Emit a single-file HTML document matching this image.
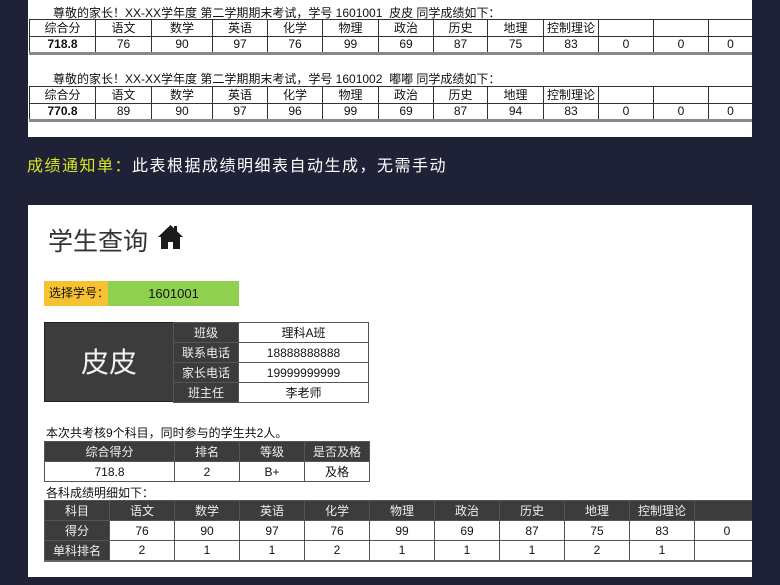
<!DOCTYPE html>
<html><head><meta charset="utf-8"><style>
*{margin:0;padding:0;box-sizing:border-box}
body{width:780px;height:585px;background:#1f2236;position:relative;overflow:hidden;font-family:"Liberation Sans","Noto Sans CJK SC",sans-serif;color:#111}
.p{position:absolute;background:#fff}
.a{position:absolute;white-space:nowrap}
table{position:absolute;border-collapse:collapse;table-layout:fixed}
td{text-align:center;font-size:12px;padding:0;overflow:hidden;white-space:nowrap}
.t1 td{border:1px solid #333;height:17px;line-height:15px}
.t1{border-bottom:3px solid #888}
.d{background:#3c3c3c;color:#eee}
.t2 td{border:1px solid #555;height:20px}
</style></head><body>
<div class="p" style="left:28px;top:0;width:724px;height:137px"></div>
<div class="a" style="left:53px;top:4px;font-size:12px">尊敬的家长！XX-XX学年度 第二学期期末考试，学号 1601001&nbsp; 皮皮 同学成绩如下：</div>
<table class="t1" style="left:29px;top:19px;width:723px">
<colgroup><col style="width:66px"><col style="width:56px"><col style="width:61px"><col style="width:55px"><col style="width:55px"><col style="width:56px"><col style="width:55px"><col style="width:54px"><col style="width:56px"><col style="width:55px"><col style="width:55px"><col style="width:55px"><col style="width:44px"></colgroup>
<tr><td>综合分</td><td>语文</td><td>数学</td><td>英语</td><td>化学</td><td>物理</td><td>政治</td><td>历史</td><td>地理</td><td>控制理论</td><td></td><td></td><td></td></tr>
<tr><td><b>718.8</b></td><td>76</td><td>90</td><td>97</td><td>76</td><td>99</td><td>69</td><td>87</td><td>75</td><td>83</td><td>0</td><td>0</td><td>0</td></tr></table>
<div class="a" style="left:53px;top:70px;font-size:12px">尊敬的家长！XX-XX学年度 第二学期期末考试，学号 1601002&nbsp; 嘟嘟 同学成绩如下：</div>
<table class="t1" style="left:29px;top:86px;width:723px">
<colgroup><col style="width:66px"><col style="width:56px"><col style="width:61px"><col style="width:55px"><col style="width:55px"><col style="width:56px"><col style="width:55px"><col style="width:54px"><col style="width:56px"><col style="width:55px"><col style="width:55px"><col style="width:55px"><col style="width:44px"></colgroup>
<tr><td>综合分</td><td>语文</td><td>数学</td><td>英语</td><td>化学</td><td>物理</td><td>政治</td><td>历史</td><td>地理</td><td>控制理论</td><td></td><td></td><td></td></tr>
<tr><td><b>770.8</b></td><td>89</td><td>90</td><td>97</td><td>96</td><td>99</td><td>69</td><td>87</td><td>94</td><td>83</td><td>0</td><td>0</td><td>0</td></tr></table>
<div class="a" style="left:27px;top:152px;font-size:16px;letter-spacing:1.5px;color:#fff"><span style="color:#d6e622">成绩通知单：</span>此表根据成绩明细表自动生成，无需手动</div>

<div class="p" style="left:28px;top:205px;width:724px;height:372px"></div>
<div class="a" style="left:48px;top:222px;font-size:25px;color:#333">学生查询</div>
<svg class="a" style="left:157px;top:224px" width="27" height="26" viewBox="0 0 27 26"><path d="M13.5 1 L1 13 L4 13 L4 25 L11 25 L11 18 L16 18 L16 25 L23 25 L23 13 L26 13 L20 7.2 L20 2 L17 2 L17 4.4 Z" fill="#1a1a1a"/></svg>
<div class="a" style="left:44px;top:281px;width:64px;height:25px;background:#f6c231;font-size:12px;line-height:25px;padding-left:5px">选择学号：</div>
<div class="a" style="left:108px;top:281px;width:131px;height:25px;background:#8fd14f;font-size:13px;line-height:25px;text-align:center">1601001</div>
<div class="a" style="left:44px;top:322px;width:130px;height:80px;background:#3c3c3c;color:#f2f2f2;font-size:28px;line-height:80px;text-align:center;border:1px solid #222">皮皮</div>
<table class="t2" style="left:173px;top:322px;width:195px">
<colgroup><col style="width:65px"><col style="width:130px"></colgroup>
<tr><td class="d">班级</td><td>理科A班</td></tr>
<tr><td class="d">联系电话</td><td>18888888888</td></tr>
<tr><td class="d">家长电话</td><td>19999999999</td></tr>
<tr><td class="d">班主任</td><td>李老师</td></tr></table>
<div class="a" style="left:46px;top:424px;font-size:12px">本次共考核9个科目，同时参与的学生共2人。</div>
<table class="t2" style="left:44px;top:441px;width:325px">
<colgroup><col style="width:130px"><col style="width:65px"><col style="width:65px"><col style="width:65px"></colgroup>
<tr><td class="d" style="height:19px">综合得分</td><td class="d">排名</td><td class="d">等级</td><td class="d">是否及格</td></tr>
<tr><td>718.8</td><td>2</td><td>B+</td><td>及格</td></tr></table>
<div class="a" style="left:46px;top:484px;font-size:12px">各科成绩明细如下：</div>
<table class="t2" style="left:44px;top:500px;width:715px;border-bottom:2px solid #666">
<colgroup><col style="width:65px"><col span="10" style="width:65px"></colgroup>
<tr><td class="d">科目</td><td class="d">语文</td><td class="d">数学</td><td class="d">英语</td><td class="d">化学</td><td class="d">物理</td><td class="d">政治</td><td class="d">历史</td><td class="d">地理</td><td class="d">控制理论</td><td class="d"></td></tr>
<tr><td class="d">得分</td><td>76</td><td>90</td><td>97</td><td>76</td><td>99</td><td>69</td><td>87</td><td>75</td><td>83</td><td>0</td></tr>
<tr><td class="d">单科排名</td><td>2</td><td>1</td><td>1</td><td>2</td><td>1</td><td>1</td><td>1</td><td>2</td><td>1</td><td></td></tr></table>
<div class="a" style="left:752px;top:0;width:28px;height:585px;background:#1f2236"></div>
</body></html>
